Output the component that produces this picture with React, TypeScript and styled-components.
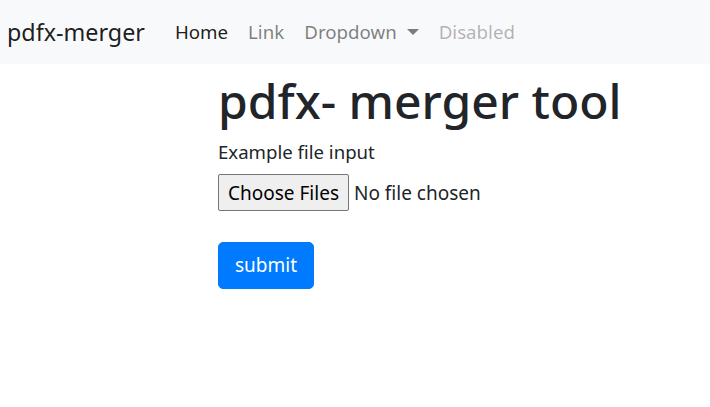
import React from "react";
import styled, { createGlobalStyle } from "styled-components";

const GlobalStyle = createGlobalStyle`
  body {
    margin: 0;
    font-family: "Noto Sans", "Open Sans", sans-serif;
    font-size: 18px;
    line-height: 1.5;
    color: #212529;
    background: #fff;
  }
`;

const Navbar = styled.nav`
  display: flex;
  align-items: center;
  height: 64px;
  padding: 0 7px;
  background: #f8f9fa;
`;

const Brand = styled.a`
  font-size: 23.3px;
  color: rgba(0, 0, 0, 0.9);
  margin-right: 20px;
  text-decoration: none;
`;

const NavList = styled.ul`
  display: flex;
  list-style: none;
  margin: 0;
  padding: 0;
`;

const NavLink = styled.a<{ $tone: "active" | "normal" | "disabled" }>`
  display: flex;
  align-items: center;
  padding: 8px 10px;
  font-size: 18.7px;
  text-decoration: none;
  color: ${(p) =>
    p.$tone === "active"
      ? "rgba(0,0,0,0.9)"
      : p.$tone === "disabled"
      ? "rgba(0,0,0,0.3)"
      : "rgba(0,0,0,0.5)"};
`;

const Caret = styled.span`
  display: inline-block;
  margin-left: 10px;
  border-top: 6.5px solid currentColor;
  border-left: 6.5px solid transparent;
  border-right: 6.5px solid transparent;
`;

const Main = styled.main`
  padding: 8px 0 0 218px;
`;

const Title = styled.h1`
  font-size: 48px;
  font-weight: 500;
  line-height: 1.2;
  margin: 0 0 8px;
`;

const Label = styled.label`
  display: block;
  font-size: 18.6px;
  margin-bottom: 9px;
`;

const FileInput = styled.input`
  display: block;
  font-family: inherit;
  font-size: 19px;
  color: #212529;
  margin-bottom: 31px;

  &::file-selector-button {
    font-family: inherit;
    font-size: 19px;
    color: #000;
    background: #efefef;
    border: 1px solid #767676;
    border-radius: 2px;
    padding: 5px 9px 4px;
    margin-right: 5px;
  }
`;

const SubmitButton = styled.button`
  font-family: inherit;
  font-size: 19px;
  line-height: 1.5;
  color: #fff;
  background: #007bff;
  border: 1px solid #007bff;
  border-radius: 5px;
  padding: 8px 16px;
  cursor: pointer;
`;

export default function App() {
  return (
    <>
      <GlobalStyle />
      <Navbar>
        <Brand href="#">pdfx-merger</Brand>
        <NavList>
          <li>
            <NavLink $tone="active" href="#">Home</NavLink>
          </li>
          <li>
            <NavLink $tone="normal" href="#">Link</NavLink>
          </li>
          <li>
            <NavLink $tone="normal" href="#">
              Dropdown
              <Caret />
            </NavLink>
          </li>
          <li>
            <NavLink $tone="disabled" href="#">Disabled</NavLink>
          </li>
        </NavList>
      </Navbar>
      <Main>
        <Title>pdfx- merger tool</Title>
        <form>
          <Label htmlFor="files">Example file input</Label>
          <FileInput id="files" type="file" multiple />
          <SubmitButton type="submit">submit</SubmitButton>
        </form>
      </Main>
    </>
  );
}
